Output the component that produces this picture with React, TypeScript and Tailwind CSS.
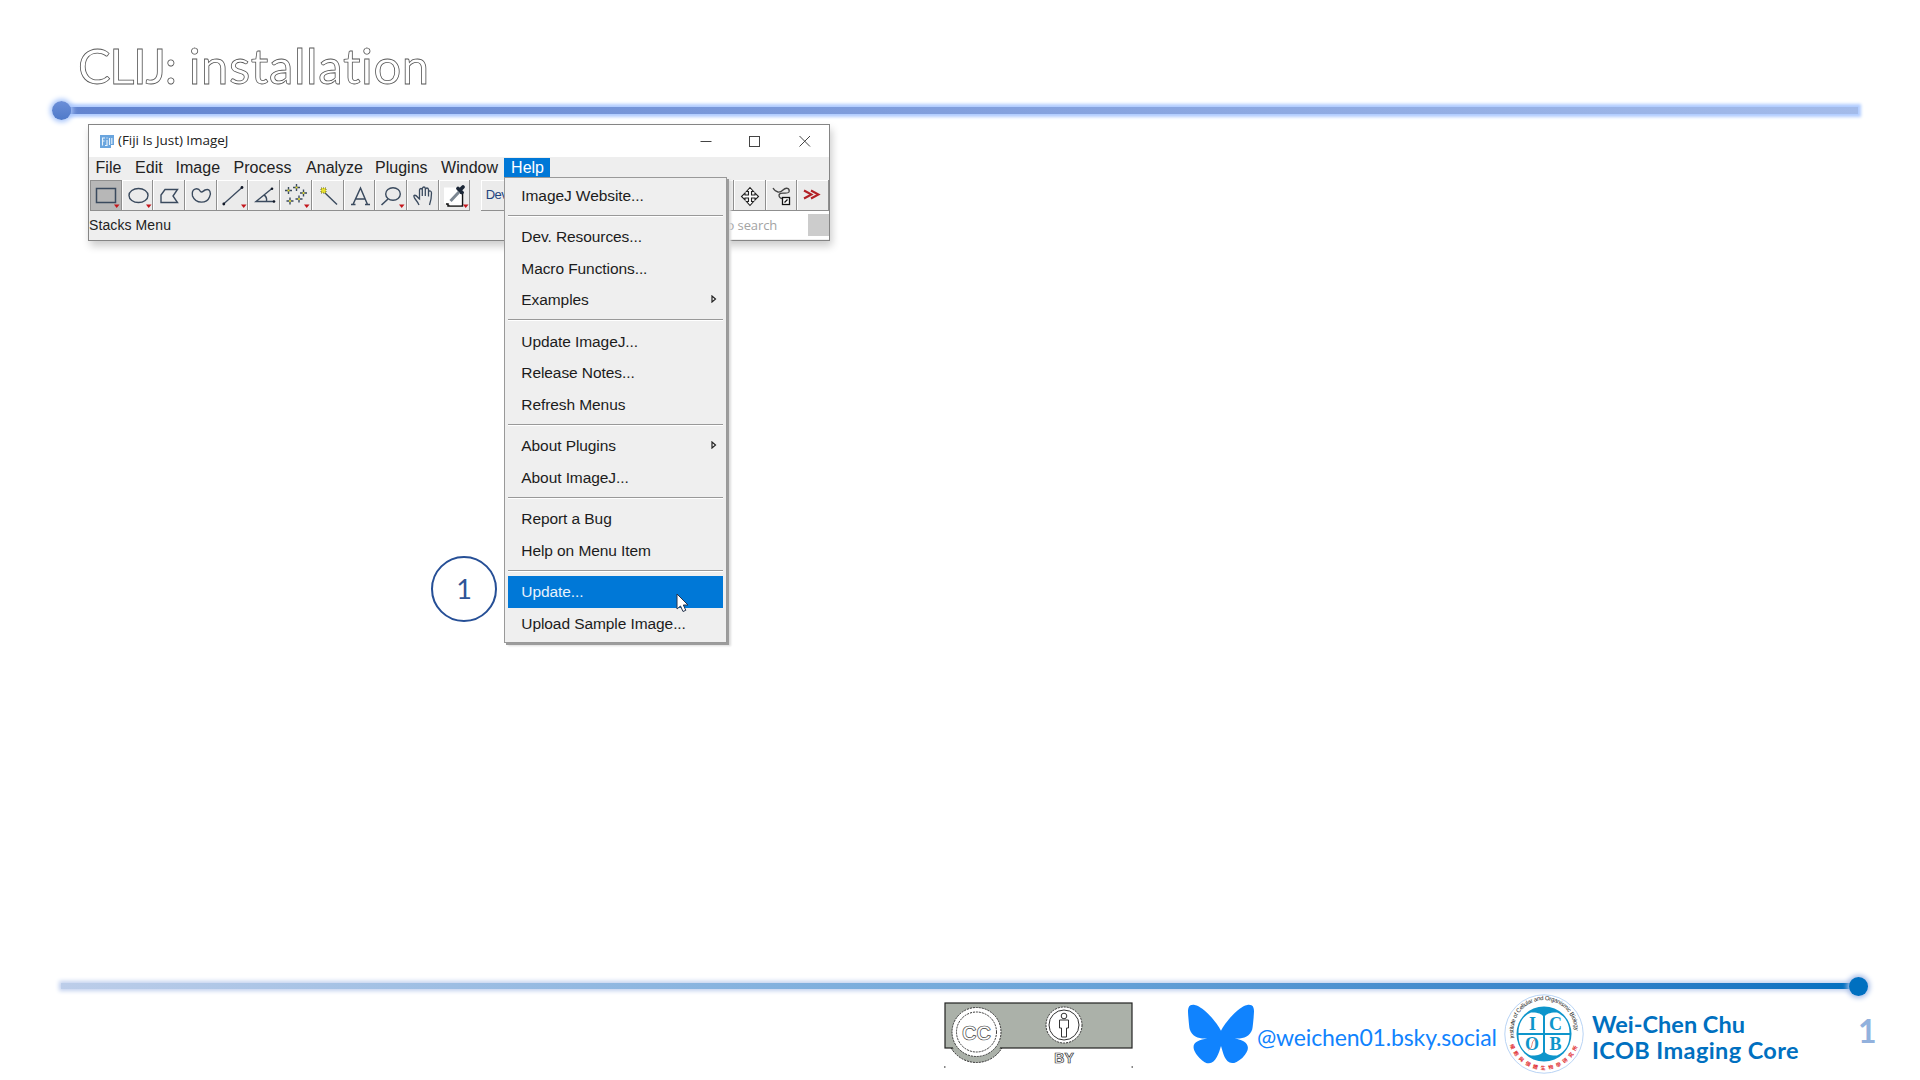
import React from "react";
import { FaBluesky } from "react-icons/fa6";

const ink = "#3a4a5e";

const drawings: Record<string, React.ReactNode> = {
  rect: <rect x="4.5" y="7.5" width="19" height="14" fill="none" stroke={ink} strokeWidth="1.5" />,
  oval: <ellipse cx="14.5" cy="14.5" rx="9.5" ry="7" fill="none" stroke={ink} strokeWidth="1.4" />,
  poly: <path d="M10 8.5H22.5L18 15L22.5 21.5H6V14Z" fill="none" stroke={ink} strokeWidth="1.4" />,
  free: (
    <path
      d="M5.500 15C4 7 11 6 13.500 10.500C15 12 16 10 18 9C23 7 24.500 12 22.500 16C20 22.500 9 23.500 5.500 15Z"
      fill="none"
      stroke={ink}
      strokeWidth="1.4"
    />
  ),
  line: (
    <>
      <path d="M4.500 23L23 6.500" stroke={ink} strokeWidth="1.3" />
      <circle cx="4.800" cy="23" r="1.400" fill="#111827" />
      <circle cx="23" cy="6.500" r="1.400" fill="#111827" />
    </>
  ),
  angle: (
    <>
      <path d="M22 7.500L6 20.500H24M14 14C16 15 17 17 16.500 20.500" fill="none" stroke={ink} strokeWidth="1.4" />
      <circle cx="22" cy="7.800" r="1.300" fill="#111827" />
      <circle cx="24" cy="20.500" r="1.300" fill="#111827" />
    </>
  ),
  points: (
    <>
      {[
        [6.5, 9.5],
        [14.5, 6.5],
        [21.500, 12],
        [8, 20],
        [17, 18],
      ].map(([x, y]) => (
        <g key={x}>
          <path d={`M${x - 3.500} ${y}H${x + 3.500}M${x} ${y - 3.500}V${y + 3.500}`} stroke={ink} strokeWidth="1.400" />
          <circle cx={x} cy={y} r="1.100" fill="#e8e030" />
        </g>
      ))}
    </>
  ),
  wand: (
    <>
      <path d="M9 10L23 23.500" stroke={ink} strokeWidth="1.400" />
      <rect x="7" y="7" width="5" height="5" fill="#e8e030" stroke="#6b6b30" strokeWidth="1" strokeDasharray="1 1" />
    </>
  ),
  text: (
    <path d="M5 23.500H9.500M19 23.500H24M7 23.500L14.500 7L21.500 23.500M9.500 18H19.500" fill="none" stroke={ink} strokeWidth="1.500" />
  ),
  zoom: (
    <>
      <ellipse cx="16" cy="13" rx="7.300" ry="6.300" fill="none" stroke={ink} strokeWidth="1.400" />
      <path d="M11 18L4.500 24" stroke={ink} strokeWidth="1.600" />
    </>
  ),
  hand: (
    <path
      d="M10 24C8 19 4 17 5 14.500C7 13 9 17 10.500 18V9C11 7 13 7 13.300 9V15V7.500C14 5.500 16 5.500 16.300 7.500V15V8.500C17 6.500 19 6.500 19.500 8.500V15.500V11C20.500 9 22.500 10 22.500 12C22.500 18 22 20 20.500 24"
      fill="none"
      stroke={ink}
      strokeWidth="1.300"
    />
  ),
  dropper: (
    <>
      <rect x="3" y="6.500" width="16" height="16" fill="#fff" />
      <path d="M5 23H7V25H21.500V12H19" fill="none" stroke="#111" strokeWidth="1.500" />
      <path d="M9 23.300H19.500V13" fill="none" stroke="#fff" strokeWidth="2" />
      <path d="M9.500 20L18 11" stroke="#7c8792" strokeWidth="3" />
      <path d="M17 7.500L21 11.500M19.500 8.500L22 6" stroke="#1c2737" strokeWidth="3.800" strokeLinecap="round" />
    </>
  ),
  move: (
    <path
      d="M14 6.500L17.500 10.500H15.500V14H19V12L22.500 15.500L19 19V17H15.500V20.500H17.500L14 24.500L10.500 20.500H12.500V17H9V19L5.500 15.500L9 12V14H12.500V10.500H10.500Z"
      fill="#fff"
      stroke="#222"
      strokeWidth="1.100"
    />
  ),
  route: (
    <>
      <path d="M5 7C8 12 12 12 15 9C18 6 22 7 21 11C19 14 12 10 11 14C11 17 13 17.500 15 17.500" fill="none" stroke="#444" strokeWidth="1.300" />
      <rect x="14.500" y="16.500" width="7" height="7" fill="#fff" stroke="#111" strokeWidth="1.300" />
      <path d="M16.500 21.500L19.500 18.500" stroke="#111" strokeWidth="1.300" />
    </>
  ),
  more: <path d="M5 9.500L12.500 13.500L5 17.500M12 9.500L19.500 13.500L12 17.500" fill="none" stroke="#b32025" strokeWidth="2" />,
};

function ToolButton({ name, marked, pressed }: { name: string; marked?: boolean; pressed?: boolean }) {
  return (
    <div
      className={`h-[31px] w-[31.7px] shrink-0 border-r-[1.5px] border-b-[1.5px] border-[#8f8f8f] ${
        pressed ? "bg-[#b7b7b7] border-t border-l" : "bg-[#ebebeb] shadow-[inset_1px_1px_0_#fff]"
      }`}
    >
      <svg viewBox="-2 -1 31 31" className={`h-[31px] w-[31px] ${pressed ? "-ml-px -mt-px" : ""}`}>
        {drawings[name]}
        {marked && <path d="M22 23.500H27.500L24.700 27Z" fill="#c4161c" />}
      </svg>
    </div>
  );
}

type Item = { label: string; sub?: boolean; active?: boolean };
const groups: Item[][] = [
  [{ label: "ImageJ Website..." }],
  [{ label: "Dev. Resources..." }, { label: "Macro Functions..." }, { label: "Examples", sub: true }],
  [{ label: "Update ImageJ..." }, { label: "Release Notes..." }, { label: "Refresh Menus" }],
  [{ label: "About Plugins", sub: true }, { label: "About ImageJ..." }],
  [{ label: "Report a Bug" }, { label: "Help on Menu Item" }],
  [{ label: "Update...", active: true }, { label: "Upload Sample Image..." }],
];

function HelpMenu() {
  return (
    <div className="absolute left-[415px] top-[52px] h-[466px] w-[223px] border border-[#999] bg-[#efefef] px-[3px] pt-[1.6px] shadow-[2px_2px_0_#9c9c9c,4px_3px_2px_#dcdcdc]">
      {groups.map((group, i) => (
        <React.Fragment key={i}>
          {i > 0 && (
            <div className="h-[9.6px] pt-[3.5px]">
              <div className="h-[2px] border-t border-b border-t-[#999] border-b-white" />
            </div>
          )}
          {group.map((item) => (
            <div
              key={item.label}
              className={`flex h-[31.7px] items-center justify-between pl-[13.3px] pr-[6px] text-[15.5px] tracking-[-0.08px] whitespace-nowrap ${
                item.active ? "bg-[#0078d7] text-[#e8f2fc]" : "text-[#1c1c1c]"
              }`}
            >
              <span>{item.label}</span>
              {item.sub && (
                <svg viewBox="0 0 6 8" className="-mt-0.5 h-2 w-1.5">
                  <path d="M1 1V7L4.500 4Z" fill="#fff" stroke="#222" strokeWidth="1.200" />
                </svg>
              )}
            </div>
          ))}
        </React.Fragment>
      ))}
      <svg viewBox="0 0 14 20" className="absolute left-[171px] top-[415px] h-5 w-3.5">
        <path d="M1 1V16L4.500 13L7 18.500L9.800 17.300L7.300 12H12Z" fill="#fff" stroke="#26344d" strokeWidth="1" />
      </svg>
    </div>
  );
}

const menus: [string, string][] = [
  ["File", "w-[39.5px]"],
  ["Edit", "w-[40.5px]"],
  ["Image", "w-[58px]"],
  ["Process", "w-[72.5px]"],
  ["Analyze", "w-[69px]"],
  ["Plugins", "w-[66px]"],
  ["Window", "w-[63px]"],
];

function ImageJWindow() {
  return (
    <div className="relative ml-[88px] h-[117px] w-[742px] border-[1.5px] border-[#858585] bg-[#eeeeee] font-['Liberation_Sans',sans-serif] shadow-[2px_5px_8px_rgba(0,0,0,0.2)]">
      <div className="flex h-8 items-center bg-white pl-[11px] pr-[18px]">
        <svg viewBox="0 0 14 13" className="mr-[4px] h-[13px] w-[14px]">
          <path d="M0 0H14V10H11V13H0Z" fill="#6aa5de" />
          <path d="M2.500 10.500V3H5M2.500 6H4.500M7 5V10.500H5M9.500 3V10M11.800 3V9M7 2.500V3.500" fill="none" stroke="#e9f3fc" strokeWidth="1.100" />
        </svg>
        <span className="-mt-px grow font-['Open_Sans',sans-serif] text-[13.5px] tracking-[-0.05px] text-[#222]">(Fiji Is Just) ImageJ</span>
        <svg viewBox="0 0 111 12" className="h-3 w-[111px] shrink-0" fill="none" stroke="#444" strokeWidth="1">
          <path d="M0.500 6.500H11.500M99.500 1L110 11.500M110 1L99.500 11.500" />
          <rect x="49.500" y="1.500" width="10" height="10" />
        </svg>
      </div>
      <div className="flex h-[22px] items-center pl-[6.6px] text-[16px] text-[#222]">
        {menus.map(([label, w]) => (
          <span key={label} className={`shrink-0 ${w}`}>
            {label}
          </span>
        ))}
        <span className="h-5 w-[46px] bg-[#0078d7] pl-[7px] leading-5 text-white">Help</span>
      </div>
      <div className="flex h-[32px] pt-px pl-[1px]">
        <ToolButton name="rect" marked pressed />
        <ToolButton name="oval" marked />
        <ToolButton name="poly" />
        <ToolButton name="free" />
        <ToolButton name="line" marked />
        <ToolButton name="angle" />
        <ToolButton name="points" marked />
        <ToolButton name="wand" />
        <ToolButton name="text" />
        <ToolButton name="zoom" marked />
        <ToolButton name="hand" />
        <ToolButton name="dropper" marked />
        <div className="ml-[10.5px] flex h-[31px] w-[31px] items-center border-b-[1.5px] border-[#8f8f8f] bg-[#ebebeb] pl-[5px] text-[13px] tracking-[-0.6px] text-[#24457f] shadow-[inset_1px_1px_0_#fff]">
          Dev
        </div>
        <div className="ml-auto flex">
          <ToolButton name="blank" />
          <ToolButton name="move" />
          <ToolButton name="route" />
          <ToolButton name="more" />
        </div>
      </div>
      <div className="flex h-[28px] justify-between text-[14px] tracking-[0.1px] text-[#222]">
        <span className="leading-[29px]">Stacks Menu</span>
        <div className="flex w-[122px] items-center bg-white">
          <span className="w-[101px] pl-[15px] pt-px font-['Open_Sans',sans-serif] text-[13px] tracking-[-0.1px] text-[#a3a3a3]">to search</span>
          <div className="h-[22px] w-[21px] bg-[#cccccc]" />
        </div>
      </div>
      <HelpMenu />
      <div className="absolute left-[342px] top-[431px] flex h-[66px] w-[66px] items-center justify-center rounded-full border-2 border-[#264f96] bg-white font-['Lato',sans-serif] text-[27px] text-[#2f5597]">
        1
      </div>
    </div>
  );
}

function CcBadge() {
  return (
    <svg viewBox="0 0 190 66" className="h-[66px] w-[190px] shrink-0 font-['Liberation_Sans',sans-serif]">
      <circle cx="32.500" cy="31" r="29.500" fill="#abb1a9" stroke="#222" strokeWidth="1" strokeDasharray="2 1" />
      <rect x="1" y="1" width="187" height="45" fill="#abb1a9" stroke="#222" strokeWidth="1.200" />
      <path d="M9 46A28 28 0 0 0 56 46V44H9Z" fill="#abb1a9" />
      <circle cx="32.500" cy="30" r="24.500" fill="#fff" stroke="#333" strokeWidth="1" strokeDasharray="2 1" />
      <circle cx="32.500" cy="30" r="20" fill="#fff" stroke="#333" strokeWidth="1" strokeDasharray="2 1" />
      <text x="32.500" y="37.500" textAnchor="middle" fontSize="21" fontWeight="700" fill="#fff" stroke="#444" strokeWidth="0.700" textLength="29" lengthAdjust="spacingAndGlyphs">
        CC
      </text>
      <circle cx="120" cy="23" r="18" fill="#fff" stroke="#333" strokeWidth="1" strokeDasharray="2 1" />
      <circle cx="120" cy="23" r="15" fill="#fff" stroke="#333" strokeWidth="1" />
      <circle cx="120" cy="14" r="2.800" fill="#fff" stroke="#333" strokeWidth="1" />
      <path d="M115.500 18H124.500V26H122.500V35H117.500V26H115.500Z" fill="#fff" stroke="#333" strokeWidth="1" />
      <text x="120" y="61" textAnchor="middle" fontSize="14" fontWeight="700" fill="#fff" stroke="#333" strokeWidth="0.700">
        BY
      </text>
      <path d="M0 65H1.500M187.500 65H189" stroke="#111" strokeWidth="1.200" />
    </svg>
  );
}

function IcobLogo() {
  return (
    <svg viewBox="0 0 80 80" className="h-20 w-20 shrink-0">
      <defs>
        <path id="arc-top" d="M10.400 44A30.500 30.500 0 1 1 69.600 44" />
        <path id="arc-bottom" d="M5.500 50A36 36 0 0 0 74.500 50" />
      </defs>
      <circle cx="40" cy="40" r="39.200" fill="#fff" stroke="#b9d4f5" strokeWidth="1" />
      <circle cx="40" cy="40" r="27.500" fill="#0e95cb" />
      <path
        d="M39 39H14.500C14.500 29 19 22 27 18.500C33 18 38 20 39 22ZM41 39H65.500C65.500 29 61 22 53 18.500C47 18 42 20 41 22ZM39 41H14.500C14.500 51 19 58 27 61.500C33 62 38 60 39 58ZM41 41H65.500C65.500 51 61 58 53 61.500C47 62 42 60 41 58Z"
        fill="#fff"
      />
      <g fontFamily="Liberation Serif, serif" fontSize="18" fontWeight="700" fill="#0e95cb" textAnchor="middle">
        <text x="28.500" y="36">I</text>
        <text x="51.500" y="36">C</text>
        <text x="28" y="56">O</text>
        <text x="51.500" y="56">B</text>
      </g>
      <path d="M24.500 56C30 53 26 48 31.500 45" fill="none" stroke="#e58a80" strokeWidth="1" />
      <text fontFamily="Liberation Sans, sans-serif" fontSize="6" fill="#222">
        <textPath href="#arc-top" textLength="103">
          Institute of Cellular and Organismic Biology
        </textPath>
      </text>
      <text fontFamily="Noto Sans CJK TC, sans-serif" fontSize="5" fontWeight="700" fill="#e0262b">
        <textPath href="#arc-bottom" textLength="88" startOffset="1">
          細胞與個體生物學研究所
        </textPath>
      </text>
    </svg>
  );
}

export default function App() {
  return (
    <main className="flex h-[1080px] w-[1920px] flex-col overflow-hidden bg-white">
      <header className="h-[107px] shrink-0 pl-[78px] pt-[35px]">
        <h1 className="font-['Lato',sans-serif] text-[49px] leading-[60px] tracking-[0.6px] whitespace-nowrap text-white [-webkit-text-stroke:0.8px_#555]">
          <span className="tracking-[-1.4px]">CLIJ:</span> installation
        </h1>
      </header>
      <div className="ml-[52px] flex h-[7px] w-[1806px] shrink-0 items-center">
        <div className="z-10 -mr-[9px] size-[19px] shrink-0 rounded-full bg-linear-to-b from-[#6c8fd8] to-[#4f7ac9] shadow-[0_0_5px_2px_#a9c6fb]" />
        <div className="h-[7px] grow bg-linear-to-r from-[#6284d0] to-[#a3bbea] shadow-[0_0_3px_3px_#b0ccff]" />
      </div>
      <section className="h-[869px] shrink-0 pt-[10px]">
        <ImageJWindow />
      </section>
      <div className="ml-[61px] flex h-[6px] w-[1807px] shrink-0 items-center">
        <div className="h-[6px] grow bg-linear-to-r from-[#bccde9] via-[#74aadb] to-[#0070c0] shadow-[0_0_4px_2px_#c2d1ef]" />
        <div className="z-10 -ml-[9px] size-[19px] shrink-0 rounded-full bg-[#0070c0] shadow-[0_0_5px_2px_#a9bfe8]" />
      </div>
      <footer className="flex h-[91px] shrink-0 items-start pl-[944px]">
        <div className="pt-[13px]">
          <CcBadge />
        </div>
        <FaBluesky className="ml-[54px] mt-[12px] h-[66px] w-[66px] shrink-0 text-[#1083fe]" />
        <span className="ml-[3px] mt-[32px] w-[247px] shrink-0 font-['Lato',sans-serif] text-[23px] leading-8 tracking-[-0.15px] whitespace-nowrap text-[#1083fe]">
          @weichen01.bsky.social
        </span>
        <div className="mt-[5px]">
          <IcobLogo />
        </div>
        <div className="ml-[8px] mt-[22px] w-[266px] shrink-0 font-['Lato',sans-serif] text-[23.5px] leading-[26px] font-bold whitespace-nowrap text-[#0070c0]">
          <div>Wei-Chen Chu</div>
          <div className="tracking-[0.4px]">ICOB Imaging Core</div>
        </div>
        <span className="mt-[22px] font-['Lato',sans-serif] text-[32px] leading-10 font-bold text-[#92b1dd]">1</span>
      </footer>
    </main>
  );
}
